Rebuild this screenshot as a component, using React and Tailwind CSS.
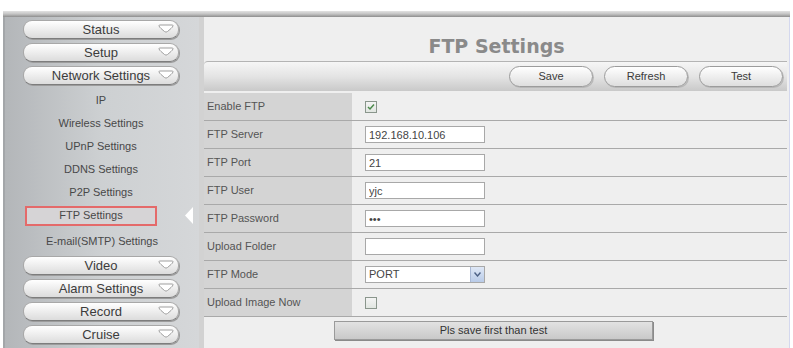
import { useState } from "react";

const topMenu = ["Status", "Setup", "Network Settings"];
const bottomMenu = ["Video", "Alarm Settings", "Record", "Cruise"];
const subMenu = ["IP", "Wireless Settings", "UPnP Settings", "DDNS Settings", "P2P Settings"];

function Tab() {
  return (
    <svg width="16" height="10" viewBox="0 0 16 10" className="shrink-0">
      <path
        d="M1 1.5 Q1 1 2 1 H14 Q15 1 15 1.5 Q15 3 13 4.5 L9.5 7.5 Q8 8.8 6.5 7.5 L3 4.5 Q1 3 1 1.5 Z"
        fill="#ffffff"
        stroke="#a0a0a0"
        strokeWidth="1"
      />
    </svg>
  );
}

function MenuButton({ label }) {
  return (
    <div className="ml-[18px] w-[156px] h-[19px] rounded-[9px] bg-gradient-to-b from-[#ffffff] to-[#dcdcdc] border border-[#a8a8a8] border-b-[#7d7d7d] shadow-[1px_1px_0_#9c9c9c] flex items-center relative">
      <span className="flex-1 text-center text-[13px] leading-none text-[#3c3c3c]">{label}</span>
      <div className="absolute right-[4px] top-[3px]">
        <Tab />
      </div>
    </div>
  );
}

function PillButton({ label }) {
  return (
    <button className="w-[84px] h-[21px] rounded-[11px] bg-gradient-to-b from-[#ffffff] to-[#dedede] border border-[#9c9c9c] shadow-[1px_1px_0_#b8b8b8] text-[11px] text-[#3a3a3a]">
      {label}
    </button>
  );
}

function TextBox({ value, type = "text" }) {
  return (
    <input
      readOnly
      type={type}
      value={value}
      className="w-[120px] h-[17px] bg-white border border-[#a8a8a8] px-[3px] text-[11px] text-[#444] outline-none"
    />
  );
}

function CheckBox({ checked }) {
  return (
    <div className="w-[12px] h-[12px] border border-[#8a968c] bg-gradient-to-b from-[#f4f4f4] to-[#e1e6e1] flex items-center justify-center">
      {checked && (
        <svg width="8" height="8" viewBox="0 0 8 8">
          <path d="M1 4 L3 6 L7 1.5" fill="none" stroke="#4a8a4a" strokeWidth="1.5" />
        </svg>
      )}
    </div>
  );
}

function Row({ label, children }) {
  return (
    <div className="flex h-[28px] border-b border-[#a9a9a9]">
      <div className="w-[148px] bg-[#d4d4d4] flex items-center pl-[3px] text-[11px] text-[#555]">{label}</div>
      <div className="flex-1 bg-[#efefef] flex items-center pl-[13px]">{children}</div>
    </div>
  );
}

export default function App() {
  const [mode] = useState("PORT");

  return (
    <div className="w-[793px] h-[348px] bg-white overflow-hidden pt-[11px] pl-[3px] pr-[3px] font-['Liberation_Sans',Arial,sans-serif]">
      <div className="h-[6px] bg-gradient-to-b from-[#e2e2e2] via-[#c4c4c4] to-[#8e8e8e]" />
      <div className="flex h-[331px]">
        {/* Sidebar */}
        <aside className="w-[196px] bg-gradient-to-r from-[#b3b6b9] via-[#cdd0d2] to-[#d5d7d9] border-l-2 border-[#a3a6a9] flex flex-col">
          <div className="flex flex-col gap-[4px] pt-[3px]">
            {topMenu.map((m) => (
              <MenuButton key={m} label={m} />
            ))}
          </div>

          <div className="flex flex-col pt-[4px] text-[11px] text-[#484848]">
            {subMenu.map((s) => (
              <div key={s} className="h-[23px] flex items-center justify-center pr-[2px]">
                {s}
              </div>
            ))}
            <div className="h-[23px] flex items-center relative">
              <div className="ml-[20px] w-[132px] h-[20px] border-2 border-[#e46a6a] bg-[#d6d4d6] flex items-center justify-center">
                FTP Settings
              </div>
              <svg width="8" height="17" viewBox="0 0 8 17" className="absolute left-[180px] top-[3px]">
                <path d="M8 0 L0 8.5 L8 17 Z" fill="#ffffff" />
              </svg>
            </div>
            <div className="h-[23px] mt-[3px] flex items-center justify-center">E-mail(SMTP) Settings</div>
          </div>

          <div className="flex flex-col gap-[4px] pt-[3px]">
            {bottomMenu.map((m) => (
              <MenuButton key={m} label={m} />
            ))}
          </div>
        </aside>

        {/* Main panel */}
        <main className="flex-1 bg-[#efefef] border-l-[5px] border-[#d2d2d2] border-r border-r-[#d4d8ee] flex flex-col">
          <div className="h-[44px] flex items-center justify-center pt-[14px]">
            <h1 className="font-['DejaVu_Sans',Verdana,sans-serif] font-bold text-[19px] text-[#8a8a8a]">
              FTP Settings
            </h1>
          </div>

          <div className="h-[30px] mr-[2px] rounded-tl-[4px] border-t border-[#b4b4b4] bg-gradient-to-b from-[#f6f6f6] via-[#e4e4e4] to-[#c9c9c9] flex items-center justify-end gap-[11px] pr-[4px]">
            <PillButton label="Save" />
            <PillButton label="Refresh" />
            <PillButton label="Test" />
          </div>

          <div className="mt-[2px] mr-[2px] flex flex-col">
            <Row label="Enable FTP">
              <CheckBox checked />
            </Row>
            <Row label="FTP Server">
              <TextBox value="192.168.10.106" />
            </Row>
            <Row label="FTP Port">
              <TextBox value="21" />
            </Row>
            <Row label="FTP User">
              <TextBox value="yjc" />
            </Row>
            <Row label="FTP Password">
              <TextBox value="abc" type="password" />
            </Row>
            <Row label="Upload Folder">
              <TextBox value="" />
            </Row>
            <Row label="FTP Mode">
              <div className="w-[120px] h-[17px] bg-white border border-[#a8a8a8] flex items-center">
                <span className="flex-1 pl-[3px] text-[11px] text-[#444]">{mode}</span>
                <div className="w-[14px] h-[15px] bg-gradient-to-b from-[#dfe8f6] to-[#b9cbe8] border-l border-[#a9b9d6] flex items-center justify-center">
                  <svg width="7" height="5" viewBox="0 0 7 5">
                    <path d="M0.5 0.5 L3.5 4 L6.5 0.5" fill="none" stroke="#4d6185" strokeWidth="1.4" />
                  </svg>
                </div>
              </div>
            </Row>
            <Row label="Upload Image Now">
              <CheckBox />
            </Row>
            <div className="h-[27px] bg-[#efefef] flex items-center justify-center pr-[4px]">
              <button className="w-[319px] h-[19px] bg-gradient-to-b from-[#e2e2e2] to-[#c9c9c9] border border-[#9a9a9a] shadow-[1px_1px_0_#8a8a8a] text-[11px] text-[#333]">
                Pls save first than test
              </button>
            </div>
          </div>
        </main>
      </div>
    </div>
  );
}
